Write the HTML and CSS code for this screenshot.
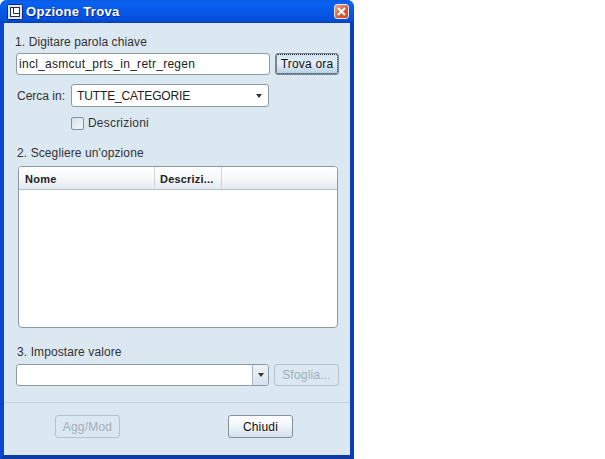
FILE: index.html
```html
<!DOCTYPE html>
<html lang="en">
<head>
    <meta charset="UTF-8">
    <title>Opzione Trova</title>
    <link rel="stylesheet" href="styles.css">
</head>
<body>
    <div class="window">
        <div class="titlebar">
            <svg class="app-icon" width="16" height="16" viewBox="0 0 16 16">
                <rect x="0.5" y="0.5" width="15" height="15" rx="1" fill="#dfe6f2" stroke="#0a2a80"/>
                <rect x="3.5" y="3.5" width="9" height="9" fill="#fff" stroke="#222c50"/>
                <path d="M6.5 3.5V9.5H12.5" fill="none" stroke="#222c50"/>
            </svg>
            <span class="title">Opzione Trova</span>
            <span class="close">
                <svg width="9" height="9" viewBox="0 0 9 9">
                    <path d="M1 1L8 8M8 1L1 8" stroke="#fff" stroke-width="2" fill="none"/>
                </svg>
            </span>
        </div>

        <div class="content">
            <div class="label first">1. Digitare parola chiave</div>
            <div class="row search-row">
                <div class="field keyword">incl_asmcut_prts_in_retr_regen</div>
                <button class="button focused">Trova ora</button>
            </div>
            <div class="row category-row">
                <span class="row-label">Cerca in:</span>
                <div class="field select">
                    <span>TUTTE_CATEGORIE</span>
                    <span class="arrow"></span>
                </div>
            </div>
            <div class="row check-row">
                <span class="checkbox"></span>
                <span class="check-label">Descrizioni</span>
            </div>

            <div class="label second">2. Scegliere un'opzione</div>
            <div class="table">
                <div class="table-head">
                    <span class="col col-name">Nome</span>
                    <span class="col col-desc">Descrizi...</span>
                </div>
            </div>

            <div class="label third">3. Impostare valore</div>
            <div class="row value-row">
                <div class="field combo">
                    <span class="combo-button"><span class="arrow"></span></span>
                </div>
                <button class="button disabled browse">Sfoglia...</button>
            </div>
        </div>

        <div class="footer">
            <button class="button disabled wide">Agg/Mod</button>
            <button class="button wide">Chiudi</button>
        </div>
    </div>
</body>
</html>
```

FILE: styles.css
```css
body {
    margin: 0;
    background-color: #fff;
    font-family: 'Liberation Sans', Arial, sans-serif;
    font-size: 12px;
    color: #333;
}

.window {
    width: 354px;
    height: 459px;
    box-sizing: border-box;
    display: flex;
    flex-direction: column;
    border-left: 4px solid #0a47d0;
    border-right: 4px solid #0a3fb8;
    border-bottom: 4px solid #0a3aa8;
    border-radius: 7px 7px 0 0;
    background-color: #dbe7f1;
}

.titlebar {
    height: 23px;
    margin: 0 -4px;
    padding: 0 5px 0 7px;
    display: flex;
    align-items: center;
    flex-shrink: 0;
    border-radius: 7px 7px 0 0;
    background: linear-gradient(#0a5ae0 0%, #0a62f0 12%, #0757e6 50%, #0450dc 85%, #0340b8 100%);
}

.app-icon {
    flex-shrink: 0;
}

.title {
    margin-left: 3px;
    font-size: 13px;
    font-weight: bold;
    letter-spacing: 0.3px;
    color: #fff;
    text-shadow: 1px 1px 0 #0a2a90;
}

.close {
    margin-left: auto;
    width: 13px;
    height: 13px;
    display: flex;
    align-items: center;
    justify-content: center;
    border: 1px solid #f2e4dc;
    border-radius: 3px;
    background: linear-gradient(135deg, #e8a890, #d8593a 60%, #c4482c);
}

.content {
    padding: 0 11px 0 12px;
    flex: 1;
}

.label {
    height: 14px;
    line-height: 14px;
    letter-spacing: 0.1px;
}

.label.first {
    margin-top: 12px;
    margin-left: -1px;
}

.label.second {
    margin-top: 16px;
    margin-left: 1px;
}

.label.third {
    margin-top: 17px;
    margin-left: 1px;
}

.row {
    display: flex;
    align-items: center;
}

.field {
    box-sizing: border-box;
    display: flex;
    align-items: center;
    background-color: #fff;
    border: 1px solid #8a9ba6;
    border-radius: 3px;
    color: #222;
}

.search-row {
    margin-top: 4px;
}

.keyword {
    width: 254px;
    height: 22px;
    padding-left: 2px;
    letter-spacing: 0.27px;
}

.button {
    box-sizing: border-box;
    height: 22px;
    padding: 0;
    border: 1px solid #7f929e;
    border-radius: 3px;
    background: linear-gradient(#fff 0%, #f4f8fb 40%, #d4e2ee 100%);
    font-family: 'Liberation Sans', Arial, sans-serif;
    font-size: 12px;
    letter-spacing: 0.2px;
    color: #111;
}

.button.focused {
    width: 64px;
    margin-left: 5px;
    border-color: #6f8796;
    outline: 1px dotted #222;
    outline-offset: -2px;
    background: linear-gradient(#cfe2f2 0%, #e6f0f8 45%, #b5d0e6 100%);
}

.button.disabled {
    border-color: #b4c3ce;
    background: #dbe7f1;
    color: #a3b0ba;
}

.button.browse {
    width: 65px;
    margin-left: 5px;
}

.button.wide {
    width: 65px;
    height: 23px;
}

.category-row {
    margin-top: 9px;
}

.row-label {
    width: 55px;
    padding-left: 1px;
    box-sizing: border-box;
}

.select {
    width: 198px;
    height: 23px;
    padding: 0 6px 0 5px;
    justify-content: space-between;
    letter-spacing: -0.13px;
}

.arrow {
    width: 0;
    height: 0;
    border-left: 3.5px solid transparent;
    border-right: 3.5px solid transparent;
    border-top: 4px solid #333;
}

.check-row {
    margin-top: 9px;
    padding-left: 55px;
}

.checkbox {
    box-sizing: border-box;
    width: 13px;
    height: 13px;
    border: 1px solid #7f929e;
    border-radius: 2px;
    background: linear-gradient(135deg, #d4e1ec, #f4f8fb);
}

.check-label {
    margin-left: 4px;
    letter-spacing: 0.2px;
}

.table {
    box-sizing: border-box;
    width: 320px;
    height: 162px;
    margin-top: 6px;
    margin-left: 2px;
    border: 1px solid #8a9ba6;
    border-radius: 4px;
    background-color: #fff;
}

.table-head {
    height: 23px;
    display: flex;
    border-bottom: 1px solid #b8c4cc;
    border-radius: 3px 3px 0 0;
    background: linear-gradient(#fff 0%, #f6f8fa 50%, #e4eaf0 100%);
    box-sizing: border-box;
}

.col {
    box-sizing: border-box;
    padding-left: 6px;
    line-height: 24px;
    font-size: 11px;
    font-weight: bold;
    letter-spacing: 0.3px;
    color: #222;
    border-right: 1px solid #cdd6dd;
}

.col-name {
    width: 136px;
}

.col-desc {
    width: 67px;
    padding-left: 5px;
    letter-spacing: 0.2px;
}

.value-row {
    margin-top: 5px;
}

.combo {
    width: 253px;
    height: 22px;
    justify-content: flex-end;
    overflow: hidden;
}

.combo-button {
    width: 15px;
    height: 100%;
    display: flex;
    align-items: center;
    justify-content: center;
    border-left: 1px solid #a4b3bd;
    background: linear-gradient(#eef4f9, #d4e2ee);
}

.footer {
    height: 53px;
    flex-shrink: 0;
    box-sizing: border-box;
    padding: 12px 0 0 51px;
    display: flex;
    gap: 108px;
    align-items: flex-start;
    border-top: 1px solid #c5d2dc;
}
```
